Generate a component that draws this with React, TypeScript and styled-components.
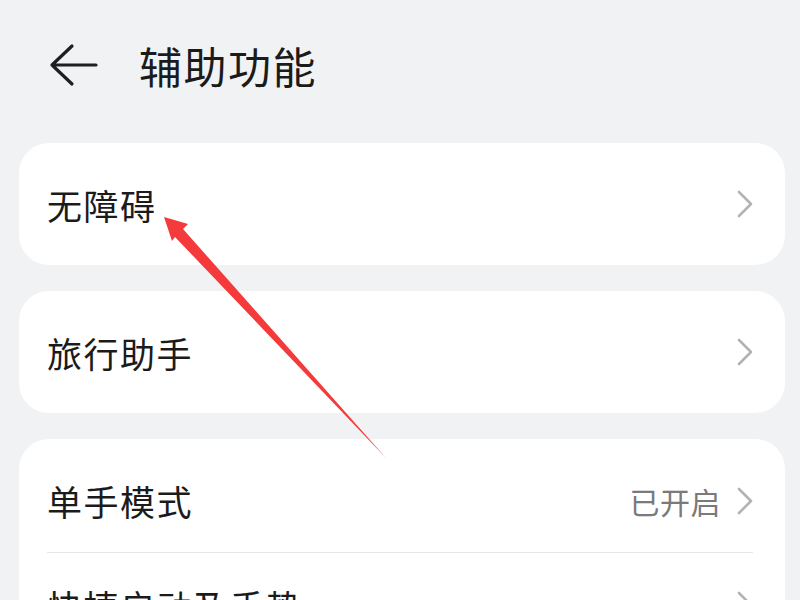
import React from "react";
import styled, { createGlobalStyle } from "styled-components";

const Global = createGlobalStyle`
  html, body { margin: 0; padding: 0; background: #f1f2f4; }
  body { font-family: "Noto Sans CJK SC", "Noto Sans", sans-serif; overflow: hidden; }
`;

const Page = styled.div`
  position: relative;
  width: 800px;
  height: 600px;
  overflow: hidden;
  background: #f1f2f4;
`;

const Header = styled.header`
  height: 143px;
  display: flex;
  align-items: center;
  padding: 0 0 14px 49px;
  box-sizing: border-box;
`;

const BackButton = styled.div`
  width: 50px;
  height: 44px;
  display: flex;
  align-items: center;
  margin-right: 40px;
`;

const Title = styled.h1`
  margin: 0;
  font-size: 43px;
  font-weight: 400;
  letter-spacing: 1.5px;
  color: #1b1b1b;
`;

const List = styled.div`
  display: flex;
  flex-direction: column;
  gap: 26px;
  margin: 0 15px 0 19px;
`;

const Card = styled.section`
  background: #ffffff;
  border-radius: 30px;
  padding: 0 32px 0 28px;
`;

const Row = styled.div<{ $divider?: boolean; $h?: number; $top?: number }>`
  box-sizing: border-box;
  height: ${(p) => p.$h ?? 122}px;
  padding-top: ${(p) => p.$top ?? 0}px;
  display: flex;
  align-items: center;
  border-bottom: ${(p) => (p.$divider ? "1.5px solid #e6e6e6" : "none")};
`;

const Label = styled.span`
  flex: 1;
  font-size: 35px;
  letter-spacing: 1.5px;
  color: #1b1b1b;
  white-space: nowrap;
`;

const Value = styled.span`
  font-size: 30px;
  letter-spacing: 0.5px;
  color: #7a7a7a;
  margin-right: 16px;
`;

const Overlay = styled.svg`
  position: absolute;
  left: 0;
  top: 0;
  pointer-events: none;
`;

const Chevron = () => (
  <svg width="16" height="28" viewBox="0 0 16 28">
    <polyline points="2,2 14,14 2,26" fill="none" stroke="#b3b3b3" strokeWidth="2.6" strokeLinecap="round" strokeLinejoin="round" />
  </svg>
);

const BackIcon = () => (
  <svg width="50" height="44" viewBox="0 0 50 44">
    <path d="M3 22 H47 M23 3 L3 22 L23 41" fill="none" stroke="#1f1f1f" strokeWidth="3.2" strokeLinecap="round" strokeLinejoin="round" />
  </svg>
);

export default function App() {
  return (
    <Page>
      <Global />
      <Header>
        <BackButton>
          <BackIcon />
        </BackButton>
        <Title>辅助功能</Title>
      </Header>
      <List>
        <Card>
          <Row>
            <Label>无障碍</Label>
            <Chevron />
          </Row>
        </Card>
        <Card>
          <Row>
            <Label>旅行助手</Label>
            <Chevron />
          </Row>
        </Card>
        <Card>
          <Row $divider $h={114} $top={10}>
            <Label>单手模式</Label>
            <Value>已开启</Value>
            <Chevron />
          </Row>
          <Row $h={104}>
            <Label>快捷启动及手势</Label>
            <Chevron />
          </Row>
        </Card>
      </List>
      <Overlay width="800" height="600" viewBox="0 0 800 600">
        <polygon points="164,217 188,224 183,229 386,458 175,237 172,241" fill="#f43a3a" />
      </Overlay>
    </Page>
  );
}
